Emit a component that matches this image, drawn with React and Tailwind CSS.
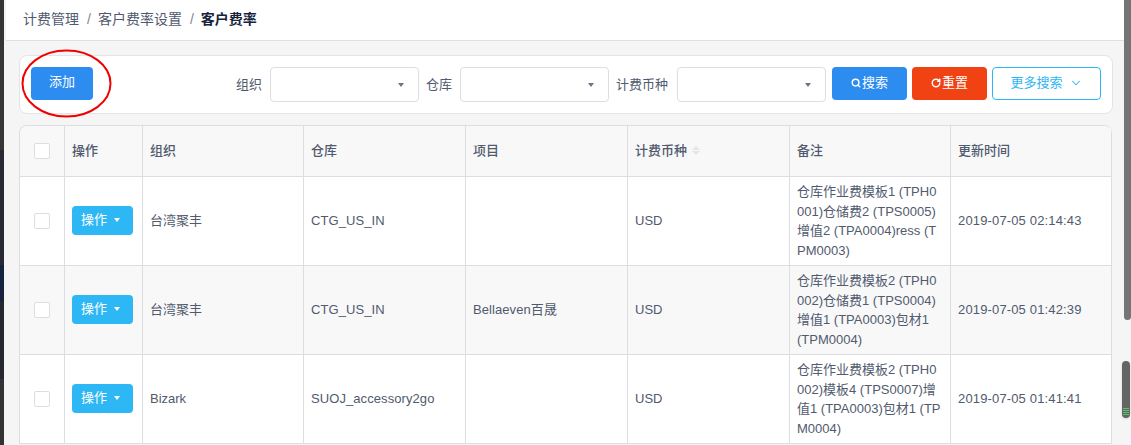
import React from 'react';
import { Search, RotateCw, ChevronDown } from 'lucide-react';

const Select = () => (
  <div className="relative h-[35px] w-[149px] rounded-[4px] border border-[#dcdee2] bg-white">
    <span className="absolute right-[14px] top-[15px] h-0 w-0 border-x-[3.5px] border-t-[4px] border-x-transparent border-t-[#6b7385]" />
  </div>
);
const Check = () => <div className="mx-auto h-4 w-4 rounded-[2px] border border-[#dcdee2] bg-white" />;
const OpBtn = () => (
  <button className="flex h-[29px] w-[61px] items-center rounded-[4px] bg-[#2db7f5] pb-[2px] pl-[9px] text-[13px] text-white">
    操作
    <span className="ml-[7px] h-0 w-0 border-x-[3.5px] border-t-[4px] border-x-transparent border-t-white" />
  </button>
);
const rows = [
  { org: '台湾聚丰', wh: 'CTG_US_IN', item: '', cur: 'USD', note: '仓库作业费模板1 (TPH0001)仓储费2 (TPS0005)增值2 (TPA0004)ress (TPM0003)', time: '2019-07-05 02:14:43' },
  { org: '台湾聚丰', wh: 'CTG_US_IN', item: 'Bellaeven百晟', cur: 'USD', note: '仓库作业费模板2 (TPH0002)仓储费1 (TPS0004)增值1 (TPA0003)包材1 (TPM0004)', time: '2019-07-05 01:42:39' },
  { org: 'Bizark', wh: 'SUOJ_accessory2go', item: '', cur: 'USD', note: '仓库作业费模板2 (TPH0002)模板4 (TPS0007)增值1 (TPA0003)包材1 (TPM0004)', time: '2019-07-05 01:41:41' },
];
const th = 'h-[51px] border-r border-b border-[#dcdee2] px-[7px] pb-[1px] text-left text-[13px] font-medium text-[#515a6e]';
const td = 'h-[89px] border-r border-b border-[#dcdee2] px-[7px] text-[13px] leading-[19.5px] text-[#515a6e]';
const tdCtl = 'h-[89px] border-r border-b border-[#dcdee2] px-[7px] pb-[1px]';
const label = 'flex h-[35px] items-center';

export default function App() {
  return (
    <div className="flex h-[445px] w-[1131px] overflow-hidden bg-[#f5f5f5] font-['Liberation_Sans','Noto_Sans_CJK_SC',sans-serif]">
      <div className="flex w-[4px] flex-col bg-[#2f2f2f]">
        <div className="h-[150px] bg-[#363636]" />
        <div className="h-[115px] bg-[#282a33]" />
        <div className="h-[36px] bg-[#16233f]" />
        <div className="h-[78px] bg-[#26282f]" />
        <div className="flex-1 bg-[#333333]" />
      </div>
      <div className="min-w-0 flex-1">
        <div className="ml-[2px] flex h-[41px] w-[1118px] items-center border-b border-[#dfdfdf] bg-white pb-[2px] pl-[17px] text-[14px] text-[#515a6e]">
          <span>计费管理</span>
          <span className="ml-[8px] mr-[7px] text-[#808695]">/</span>
          <span>客户费率设置</span>
          <span className="ml-[8px] mr-[7px] text-[#808695]">/</span>
          <span className="font-bold text-[#17233d]">客户费率</span>
        </div>
        <div className="relative px-[15px] pt-[14px]">
          <div className="flex h-[59px] w-[1094px] items-start justify-between rounded-[8px] border border-[#e3e4e6] bg-white px-[11px] pt-[11px] text-[13px] text-[#515a6e]">
            <button className="h-[33px] w-[62px] rounded-[4px] bg-[#2d8cf0] pb-[3px] text-[13px] text-white">添加</button>
            <div className="flex items-start">
              <span className={label + ' mr-2'}>组织</span>
              <Select />
              <span className={label + ' ml-[7px] mr-2'}>仓库</span>
              <Select />
              <span className={label + ' ml-[7px] mr-[9px]'}>计费币种</span>
              <Select />
              <button className="ml-[6px] flex h-[33px] w-[75px] items-center justify-center rounded-[4px] bg-[#2d8cf0] pb-[2px] text-white">
                <Search size={10} strokeWidth={3.5} />
                <span className="ml-[1px]">搜索</span>
              </button>
              <button className="ml-[5px] flex h-[33px] w-[75px] items-center justify-center rounded-[4px] bg-[#f04212] pb-[2px] text-white">
                <RotateCw size={10} strokeWidth={3.5} />
                <span className="ml-[1px]">重置</span>
              </button>
              <button className="ml-[5px] flex h-[33px] w-[109px] items-center justify-center rounded-[4px] border border-[#2db7f5] bg-white pb-[2px] text-[#2db7f5]">
                更多搜索
                <ChevronDown size={14} strokeWidth={1.8} className="ml-[6px]" />
              </button>
            </div>
          </div>
          <div className="mt-[11px] w-[1093px] overflow-hidden rounded-t-[8px] border-l border-t border-[#dcdee2]">
            <table className="w-[1092px] table-fixed border-separate border-spacing-0">
              <colgroup>
                <col className="w-[45px]" />
                <col className="w-[78px]" />
                <col className="w-[161px]" />
                <col className="w-[162px]" />
                <col className="w-[162px]" />
                <col className="w-[162px]" />
                <col className="w-[161px]" />
                <col className="w-[161px]" />
              </colgroup>
              <thead className="bg-[#f8f8f9]">
                <tr>
                  <th className={th}><Check /></th>
                  <th className={th}>操作</th>
                  <th className={th}>组织</th>
                  <th className={th}>仓库</th>
                  <th className={th}>项目</th>
                  <th className={th}>
                    <span className="inline-flex items-center">
                      计费币种
                      <span className="ml-[5px] flex flex-col gap-[1px]">
                        <span className="h-0 w-0 border-x-[4px] border-b-[4px] border-x-transparent border-b-[#e3e5e9]" />
                        <span className="h-0 w-0 border-x-[4px] border-t-[4px] border-x-transparent border-t-[#e3e5e9]" />
                      </span>
                    </span>
                  </th>
                  <th className={th}>备注</th>
                  <th className={th}>更新时间</th>
                </tr>
              </thead>
              <tbody>
                {rows.map((r, i) => (
                  <tr key={i} className={i === 1 ? 'bg-[#f8f8f9]' : 'bg-white'}>
                    <td className={tdCtl}><Check /></td>
                    <td className={tdCtl}><OpBtn /></td>
                    <td className={td + ' pb-[1px]'}>{r.org}</td>
                    <td className={td + ' tracking-[0.08px]'}>{r.wh}</td>
                    <td className={td + ' tracking-[0.08px]'}>{r.item}</td>
                    <td className={td}>{r.cur}</td>
                    <td className={td + ' break-all'}>{r.note}</td>
                    <td className={td + ' tracking-[0.15px]'}>{r.time}</td>
                  </tr>
                ))}
              </tbody>
            </table>
          </div>
          <svg className="absolute left-[17px] top-[8px]" width="92" height="70" viewBox="0 0 92 70" fill="none">
            <ellipse cx="45.5" cy="34.5" rx="44" ry="33" stroke="#f00000" strokeWidth="2" />
          </svg>
        </div>
      </div>
      <div className="relative w-0">
        <div className="absolute -left-[7px] top-0 h-[320px] w-[7px] rounded-b-[4px] bg-[#757575]" />
        <div className="absolute -left-[9px] top-[361px] flex h-[57px] w-[8px] flex-col justify-end gap-[1px] rounded-[4px] bg-[#646464] px-[1px] pb-[3px] shadow">
          <span className="h-px bg-[#55c46a]" />
          <span className="h-px bg-[#55c46a]" />
          <span className="h-px bg-[#55c46a]" />
          <span className="h-px bg-[#55c46a]" />
        </div>
      </div>
    </div>
  );
}
